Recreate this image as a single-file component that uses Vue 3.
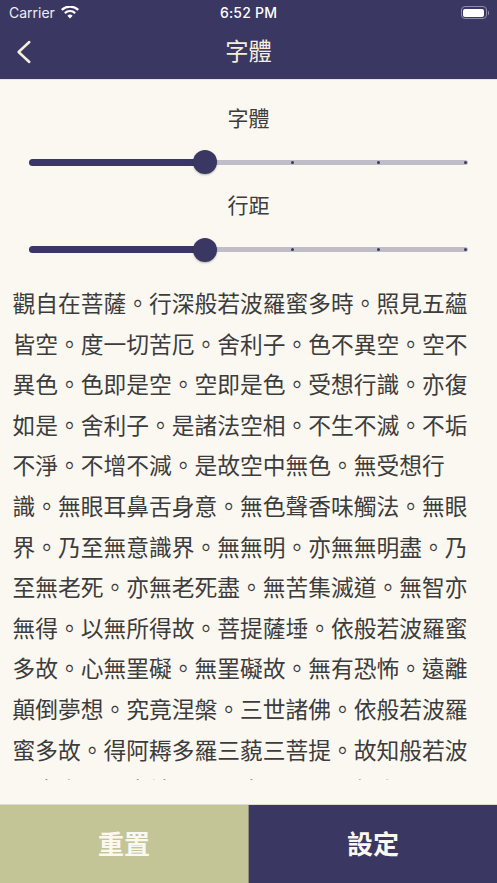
<script setup>
const sliders = [
  { label: '字體', value: 40 },
  { label: '行距', value: 40 },
]
const ticks = [60, 79.7, 99.5]
const sutra = '觀自在菩薩。行深般若波羅蜜多時。照見五蘊皆空。度一切苦厄。舍利子。色不異空。空不異色。色即是空。空即是色。受想行識。亦復如是。舍利子。是諸法空相。不生不滅。不垢不淨。不增不減。是故空中無色。無受想行識。無眼耳鼻舌身意。無色聲香味觸法。無眼界。乃至無意識界。無無明。亦無無明盡。乃至無老死。亦無老死盡。無苦集滅道。無智亦無得。以無所得故。菩提薩埵。依般若波羅蜜多故。心無罣礙。無罣礙故。無有恐怖。遠離顛倒夢想。究竟涅槃。三世諸佛。依般若波羅蜜多故。得阿耨多羅三藐三菩提。故知般若波羅蜜多。是大神咒。是大明咒。是無上咒。是'
</script>

<template>
  <div class="screen">
    <header class="header">
      <div class="status">
        <div class="status-left">
          <span class="carrier">Carrier</span>
          <svg class="wifi" viewBox="0 0 18 13" width="18" height="13">
            <path d="M9 12.6 6.4 9.8a3.7 3.7 0 0 1 5.2 0Z" fill="#fff" />
            <path d="M4.6 7.9a6.3 6.3 0 0 1 8.8 0l1.5-1.6a8.6 8.6 0 0 0-11.8 0Z" fill="#fff" />
            <path d="M1.5 4.7a10.8 10.8 0 0 1 15 0L18 3.1A13 13 0 0 0 0 3.1Z" fill="#fff" />
          </svg>
        </div>
        <span class="time">6:52 PM</span>
        <div class="status-right">
          <div class="battery"><div class="battery-fill"></div></div>
          <div class="battery-cap"></div>
        </div>
      </div>
      <div class="nav">
        <svg class="back" viewBox="0 0 18 24" width="18" height="24">
          <path d="M15.3 2 4.6 12l10.7 10" fill="none" stroke="#f3efdc" stroke-width="2.5" stroke-linecap="round" stroke-linejoin="round" />
        </svg>
        <h1 class="title">字體</h1>
      </div>
    </header>

    <main class="main">
      <section class="controls">
        <div v-for="s in sliders" :key="s.label" class="control">
          <div class="label">{{ s.label }}</div>
          <div class="slider">
            <div class="track">
              <div class="fill" :style="{ width: s.value + '%' }"></div>
              <span v-for="t in ticks" :key="t" class="tick" :style="{ left: t + '%' }"></span>
              <span class="thumb" :style="{ left: s.value + '%' }"></span>
            </div>
          </div>
        </div>
      </section>
      <p class="sutra">{{ sutra }}</p>
    </main>

    <footer class="footer">
      <button class="btn reset">重置</button>
      <button class="btn confirm">設定</button>
    </footer>
  </div>
</template>

<style scoped>
.screen {
  width: 497px;
  height: 883px;
  display: flex;
  flex-direction: column;
  overflow: hidden;
  background: #fbf8f1;
  font-family: "Noto Sans CJK TC", "Noto Sans", sans-serif;
}
.header {
  height: 80px;
  flex: none;
  box-sizing: border-box;
  background: #3b3763;
  border-bottom: 1px solid #e6e3dc;
  color: #fff;
}
.status {
  height: 25px;
  padding: 0 9px;
  display: flex;
  align-items: center;
  justify-content: space-between;
  position: relative;
  font-family: Inter, "Liberation Sans", sans-serif;
  font-size: 14px;
}
.status-left {
  display: flex;
  align-items: center;
  gap: 6px;
}
.carrier {
  color: #eeeef2;
}
.wifi {
  margin-top: -1px;
}
.time {
  position: absolute;
  left: 0;
  right: 0;
  text-align: center;
  font-weight: 500;
  letter-spacing: 0.2px;
}
.status-right {
  display: flex;
  align-items: center;
  gap: 1px;
  margin-right: -1px;
}
.battery {
  width: 26px;
  height: 13px;
  box-sizing: border-box;
  border: 1px solid #8e8ca6;
  border-radius: 4px;
  padding: 1.5px;
}
.battery-fill {
  width: 100%;
  height: 100%;
  background: #fff;
  border-radius: 2px;
}
.battery-cap {
  width: 1.5px;
  height: 4px;
  background: #8e8ca6;
  border-radius: 0 1px 1px 0;
}
.nav {
  height: 54px;
  box-sizing: border-box;
  padding-bottom: 3px;
  position: relative;
  display: flex;
  align-items: center;
  justify-content: center;
}
.back {
  position: absolute;
  left: 14px;
  top: 15px;
}
.title {
  margin: 0;
  font-size: 23.3px;
  font-weight: 400;
  color: #f3efdc;
  line-height: 1;
}
.main {
  flex: 1;
  min-height: 0;
  overflow: hidden;
  margin-bottom: 24px;
  display: flex;
  flex-direction: column;
}
.controls {
  flex: none;
  padding: 23px 29px 0 29px;
}
.control {
  height: 87.4px;
}
.label {
  height: 28px;
  line-height: 28px;
  text-align: center;
  font-size: 21px;
  color: #3c3c3c;
}
.slider {
  margin-top: 28.7px;
}
.track {
  position: relative;
  height: 5px;
  border-radius: 3px;
  background: #bfbdc8;
}
.fill {
  position: absolute;
  left: 0;
  top: -1px;
  height: 7px;
  background: #3b3763;
  border-radius: 4px;
}
.tick {
  position: absolute;
  top: 1px;
  width: 3px;
  height: 3px;
  margin-left: -1.5px;
  border-radius: 50%;
  background: #3b3763;
}
.thumb {
  position: absolute;
  top: -9.5px;
  width: 24px;
  height: 24px;
  margin-left: -12px;
  border-radius: 50%;
  background: #3b3763;
  box-shadow: 0 1px 2px rgba(0, 0, 0, 0.28);
}
.sutra {
  flex: 1;
  min-height: 0;
  overflow: hidden;
  margin: 0;
  padding: 5.3px 13px 0 12.5px;
  font-size: 22.75px;
  line-height: 40.6px;
  color: #3c3c3c;
  word-break: break-all;
}
.footer {
  height: 79px;
  flex: none;
  display: flex;
  box-sizing: border-box;
  border-top: 1px solid #dcdad3;
}
.btn {
  flex: 1;
  border: 0;
  margin: 0;
  padding: 0 0 4px;
  font-family: "Noto Sans CJK TC", sans-serif;
  font-size: 26px;
  font-weight: 700;
}
.reset {
  background: #c4c597;
  color: #fbf8f1;
  border-right: 1px solid #8f8f80;
}
.confirm {
  background: #3b3763;
  color: #fbf8f1;
}
</style>
